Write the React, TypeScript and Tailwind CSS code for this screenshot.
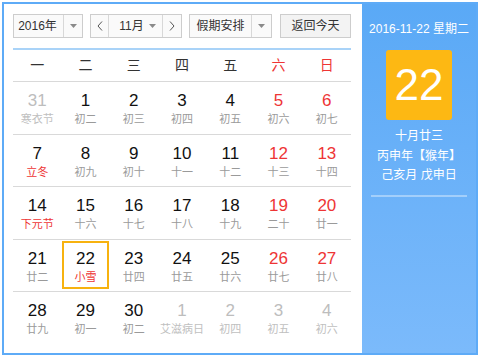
import React from 'react';

type Day = { n: number; lunar: string; other?: boolean; fest?: boolean; today?: boolean };

const weeks: Day[][] = [
    [
        { n: 31, lunar: '寒衣节', other: true },
        { n: 1, lunar: '初二' },
        { n: 2, lunar: '初三' },
        { n: 3, lunar: '初四' },
        { n: 4, lunar: '初五' },
        { n: 5, lunar: '初六' },
        { n: 6, lunar: '初七' },
    ],
    [
        { n: 7, lunar: '立冬', fest: true },
        { n: 8, lunar: '初九' },
        { n: 9, lunar: '初十' },
        { n: 10, lunar: '十一' },
        { n: 11, lunar: '十二' },
        { n: 12, lunar: '十三' },
        { n: 13, lunar: '十四' },
    ],
    [
        { n: 14, lunar: '下元节', fest: true },
        { n: 15, lunar: '十六' },
        { n: 16, lunar: '十七' },
        { n: 17, lunar: '十八' },
        { n: 18, lunar: '十九' },
        { n: 19, lunar: '二十' },
        { n: 20, lunar: '廿一' },
    ],
    [
        { n: 21, lunar: '廿二' },
        { n: 22, lunar: '小雪', fest: true, today: true },
        { n: 23, lunar: '廿四' },
        { n: 24, lunar: '廿五' },
        { n: 25, lunar: '廿六' },
        { n: 26, lunar: '廿七' },
        { n: 27, lunar: '廿八' },
    ],
    [
        { n: 28, lunar: '廿九' },
        { n: 29, lunar: '初一' },
        { n: 30, lunar: '初二' },
        { n: 1, lunar: '艾滋病日', other: true },
        { n: 2, lunar: '初四', other: true },
        { n: 3, lunar: '初五', other: true },
        { n: 4, lunar: '初六', other: true },
    ],
];

const weekdays = ['一', '二', '三', '四', '五', '六', '日'];

function Caret() {
    return (
        <svg width="7" height="4" viewBox="0 0 7 4" className="block">
            <path d="M0 0h7L3.5 4z" fill="#8a8a8a" />
        </svg>
    );
}

function Chevron({ dir }: { dir: 'l' | 'r' }) {
    return (
        <svg width="6" height="10" viewBox="0 0 6 10" className="block">
            <path
                d={dir === 'l' ? 'M5 0.5L1 5l4 4.5' : 'M1 0.5L5 5 1 9.5'}
                fill="none"
                stroke="#555"
                strokeWidth="1"
            />
        </svg>
    );
}

function DayCell({ d, col }: { d: Day; col: number }) {
    const weekend = col >= 5;
    const numColor = d.other ? 'text-[#bdbdbd]' : weekend ? 'text-[#ee3535]' : 'text-[#111]';
    const lunarColor = d.other ? 'text-[#c0c0c0]' : d.fest ? 'text-[#ee3535]' : 'text-[#9a9a9a]';
    return (
        <div className="relative flex flex-col items-center pt-[10px]">
            {d.today && (
                <div className="absolute left-[1px] right-[1px] top-[1px] bottom-[2px] border-2 border-[#f7b20f]" />
            )}
            <div className={`text-[17px] leading-[18px] ${numColor}`}>{d.n}</div>
            <div className={`mt-[1px] text-[11px] leading-[16px] whitespace-nowrap ${lunarColor}`}>{d.lunar}</div>
        </div>
    );
}

export default function App() {
    return (
        <div
            className="w-[480px] h-[360px] bg-white pt-[2px] pl-[2px]"
            style={{ fontFamily: '"Liberation Sans", "Noto Sans CJK SC", sans-serif' }}
        >
            <div className="w-[476px] h-[353px] border-2 border-[#5eabf7] flex">
                {/* left: calendar */}
                <div className="w-[358px] pl-[9px] pr-[11px] pt-[10px]">
                    <div className="flex items-center h-[24px] text-[12px] text-[#333]">
                        <div className="flex h-full w-[70px] border border-[#cdcdcd] bg-[#fafafa]">
                            <div className="flex-1 flex items-center justify-center pr-[2px]">2016年</div>
                            <div className="w-[19px] border-l border-[#d8d8d8] flex items-center justify-center">
                                <Caret />
                            </div>
                        </div>
                        <div className="ml-[7px] flex h-full w-[92px] border border-[#cdcdcd] bg-[#fafafa]">
                            <div className="w-[18px] border-r border-[#d8d8d8] flex items-center justify-center">
                                <Chevron dir="l" />
                            </div>
                            <div className="flex-1 flex items-center justify-center gap-[5px] pl-[4px]">
                                <span>11月</span>
                                <Caret />
                            </div>
                            <div className="w-[19px] border-l border-[#d8d8d8] flex items-center justify-center">
                                <Chevron dir="r" />
                            </div>
                        </div>
                        <div className="ml-[7px] flex h-full w-[83px] border border-[#cdcdcd] bg-[#fafafa]">
                            <div className="flex-1 flex items-center justify-center">假期安排</div>
                            <div className="w-[20px] border-l border-[#d8d8d8] flex items-center justify-center">
                                <Caret />
                            </div>
                        </div>
                        <div className="ml-auto h-full w-[71px] border border-[#cdcdcd] bg-[#f3f3f3] flex items-center justify-center">
                            返回今天
                        </div>
                    </div>

                    <div className="mt-[10px] h-[2px] bg-[#a9d3f8]" />

                    <div className="grid grid-cols-7 h-[32px] border-b border-[#d9d9d9] text-[14px]">
                        {weekdays.map((w, i) => (
                            <div
                                key={w}
                                className={`flex items-center justify-center ${i >= 5 ? 'text-[#ee3535]' : 'text-[#333]'}`}
                            >
                                {w}
                            </div>
                        ))}
                    </div>

                    {weeks.map((wk, r) => (
                        <div
                            key={r}
                            className={`grid grid-cols-7 h-[52.5px] ${r < 4 ? 'border-b border-[#d9d9d9]' : ''}`}
                        >
                            {wk.map((d, c) => (
                                <DayCell key={c} d={d} col={c} />
                            ))}
                        </div>
                    ))}
                </div>

                {/* right: today panel */}
                <div className="flex-1 bg-linear-to-b from-[#5aa9f6] to-[#7bbafb] flex flex-col items-center text-white">
                    <div className="mt-[16px] text-[12px] leading-[18px] whitespace-nowrap">2016-11-22 星期二</div>
                    <div className="mt-[12px] w-[66px] h-[70px] rounded-[3px] bg-[#fdb813] flex items-center justify-center text-[44px] leading-none">
                        22
                    </div>
                    <div className="mt-[7px] text-[12px] leading-[19.5px] text-center whitespace-nowrap">
                        <div>十月廿三</div>
                        <div>丙申年【猴年】</div>
                        <div>己亥月 戊申日</div>
                    </div>
                    <div className="mt-[9px] w-[96px] h-[2px] bg-[#a3cffb]" />
                </div>
            </div>
        </div>
    );
}
